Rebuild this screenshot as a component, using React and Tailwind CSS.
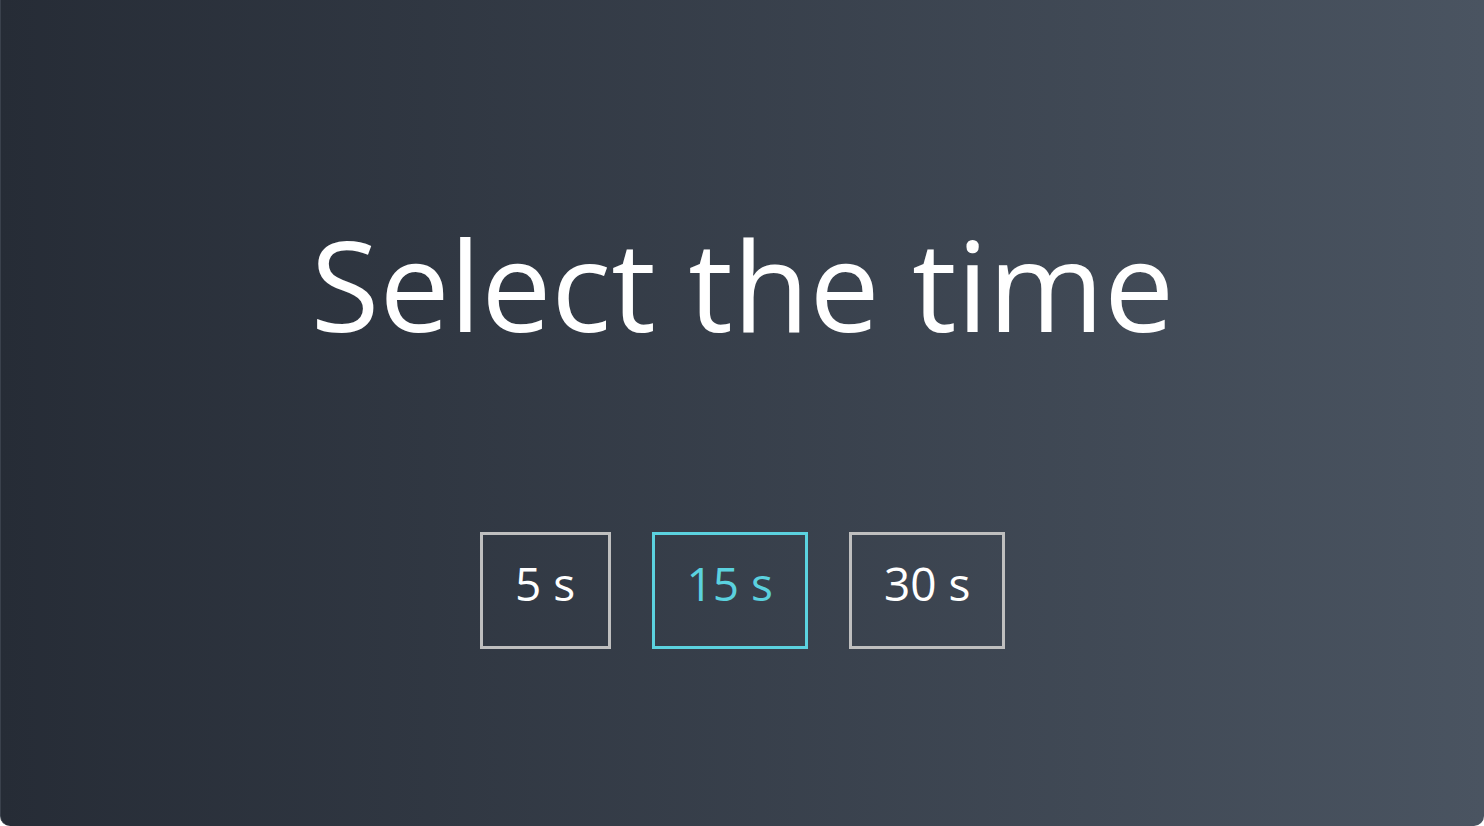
import React, { useState } from "react";

const options = [5, 15, 30];

const App = () => {
  const [selected, setSelected] = useState(15);

  return (
    <div className="w-full h-[826px] bg-white">
      <div
        className="w-full h-full flex flex-col items-center bg-gradient-to-r from-[#262c36] to-[#4a5461] rounded-b-[10px] border-l border-[#3a414c]"
        style={{ fontFamily: '"Open Sans", "Noto Sans", sans-serif' }}
      >
        <h1 className="mt-[221px] text-[125px] leading-none text-white">
          Select the time
        </h1>
        <div className="mt-[186px] flex gap-[41px]">
          {options.map((s) => (
            <button
              key={s}
              onClick={() => setSelected(s)}
              className={
                "h-[117px] min-w-[131px] px-[32px] pb-[14px] border-[3px] text-[46px] flex items-center justify-center " +
                (selected === s
                  ? "border-[#5bd2df] text-[#5bd2df]"
                  : "border-[#bfbfbf] text-white")
              }
            >
              {s} s
            </button>
          ))}
        </div>
      </div>
    </div>
  );
};

export default App;
